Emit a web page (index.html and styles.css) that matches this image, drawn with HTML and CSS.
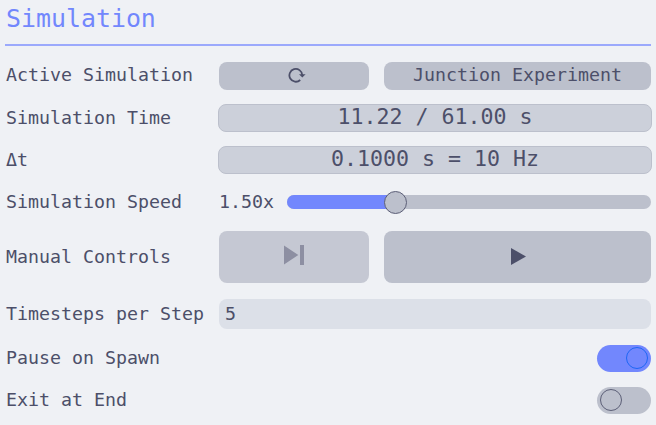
FILE: index.html
```html
<!DOCTYPE html>
<html lang="en">
<head>
<meta charset="utf-8">
<title>Simulation</title>
<link rel="stylesheet" href="styles.css">
</head>
<body>
<main class="panel">
  <h1 class="title">Simulation</h1>
  <div class="row first">
    <span class="label">Active Simulation</span>
    <div class="controls">
      <button class="button small" aria-label="Reload">
        <svg class="reload" viewBox="0 0 18 18"><path d="M12.2 14A6.4 6.4 0 1 1 14.2 9" fill="none" stroke="currentColor" stroke-width="1.8"/><path d="M11 8.3H17.6L14.3 11.6Z" fill="currentColor"/></svg>
      </button>
      <button class="button wide">Junction Experiment</button>
    </div>
  </div>
  <div class="row"><span class="label">Simulation Time</span><div class="readout">11.22 / 61.00 s</div></div>
  <div class="row"><span class="label">Δt</span><div class="readout">0.1000 s = 10 Hz</div></div>
  <div class="row">
    <span class="label">Simulation Speed</span>
    <div class="speed"><span class="rate">1.50x</span><div class="track"><div class="fill"></div><div class="thumb"></div></div></div>
  </div>
  <div class="row tall">
    <span class="label">Manual Controls</span>
    <div class="controls">
      <button class="button small disabled" disabled aria-label="Step"><svg class="step" viewBox="0 0 20 20"><path d="M0 0.5L14.3 10L0 19.5ZM16 0H20V20H16Z" fill="currentColor"/></svg></button>
      <button class="button wide" aria-label="Play"><svg class="play" viewBox="0 0 15 17"><path d="M0 0L15 8.5L0 17Z" fill="currentColor"/></svg></button>
    </div>
  </div>
  <div class="row entry"><span class="label">Timesteps per Step</span><div class="input">5</div></div>
  <div class="row switch-row"><span class="label">Pause on Spawn</span><div class="switch on"><div class="knob"></div></div></div>
  <div class="row switch-row"><span class="label">Exit at End</span><div class="switch"><div class="knob"></div></div></div>
</main>
</body>
</html>
```
FILE: styles.css
```css
* { box-sizing: border-box; }
body {
  margin: 0;
  background: #eff1f5;
  color: #4c4f69;
  font: 18.28px/28px "DejaVu Sans Mono", monospace;
  overflow: hidden;
}
.panel { padding: 0 5px; }
.title {
  height: 46px;
  margin: 0 0 16px;
  padding: 4px 0 0 1px;
  border-bottom: 2px solid #9ba9fc;
  color: #7287fd;
  font-size: 24.9px;
  font-weight: 400;
  line-height: 30px;
}
.row {
  display: grid;
  grid-template-columns: 213px 434px;
  align-items: center;
  height: 28px;
  margin-bottom: 14px;
}
.label { padding-left: 1px; white-space: pre; }
.first .label { padding-bottom: 2px; line-height: 26px; }
.controls {
  display: grid;
  grid-template-columns: 150px 267px;
  gap: 15px;
  height: 100%;
  padding-left: 1px;
}
.button {
  display: flex;
  align-items: center;
  justify-content: center;
  padding: 0;
  border: 0;
  border-radius: 8px;
  background: #bcc0cc;
  color: inherit;
  font: inherit;
  line-height: 26px;
}
.wide { padding-bottom: 2px; }
.disabled { background: #c5c8d3; color: #8d8fa2; }
.reload { width: 18px; height: 18px; margin: 0 0 3px 5px; }
.step { width: 20px; height: 20px; margin: 0 0 4px; }
.play { width: 15px; height: 17px; margin-left: 2px; }
.readout {
  height: 28px;
  border: 1px solid #bcc0cc;
  border-radius: 8px;
  background: #ccd0da;
  font-size: 21.6px;
  line-height: 24px;
  text-align: center;
}
.speed { display: grid; grid-template-columns: 68px 364px; align-items: center; padding-left: 1px; }
.track { position: relative; height: 14px; border-radius: 7px; background: #bcc0cc; }
.fill { width: 109px; height: 14px; border-radius: 7px 0 0 7px; background: #7287fd; }
.thumb {
  position: absolute;
  top: -4px;
  left: 97px;
  width: 23px;
  height: 23px;
  border: 1px solid #5c5f77;
  border-radius: 50%;
  background: #bcc0cc;
}
.tall { height: 52px; margin: 15px 0 16px; }
.entry { height: 30px; margin-bottom: 15px; }
.input {
  width: 432px;
  height: 30px;
  margin-left: 1px;
  padding-left: 6px;
  border-radius: 8px;
  background: #dce0e8;
  line-height: 29px;
}
.switch-row { height: 27px; margin-bottom: 15px; }
.switch-row .label { padding-bottom: 1px; }
.switch {
  justify-self: end;
  width: 54px;
  height: 27px;
  margin-right: 1px;
  padding: 2px 3px;
  border-radius: 14px;
  background: #bcc0cc;
}
.knob { width: 22px; height: 22px; border: 1px solid #5c5f77; border-radius: 50%; }
.on { background: #7287fd; }
.on .knob { margin-left: auto; border-color: #1e66f5; }
```
